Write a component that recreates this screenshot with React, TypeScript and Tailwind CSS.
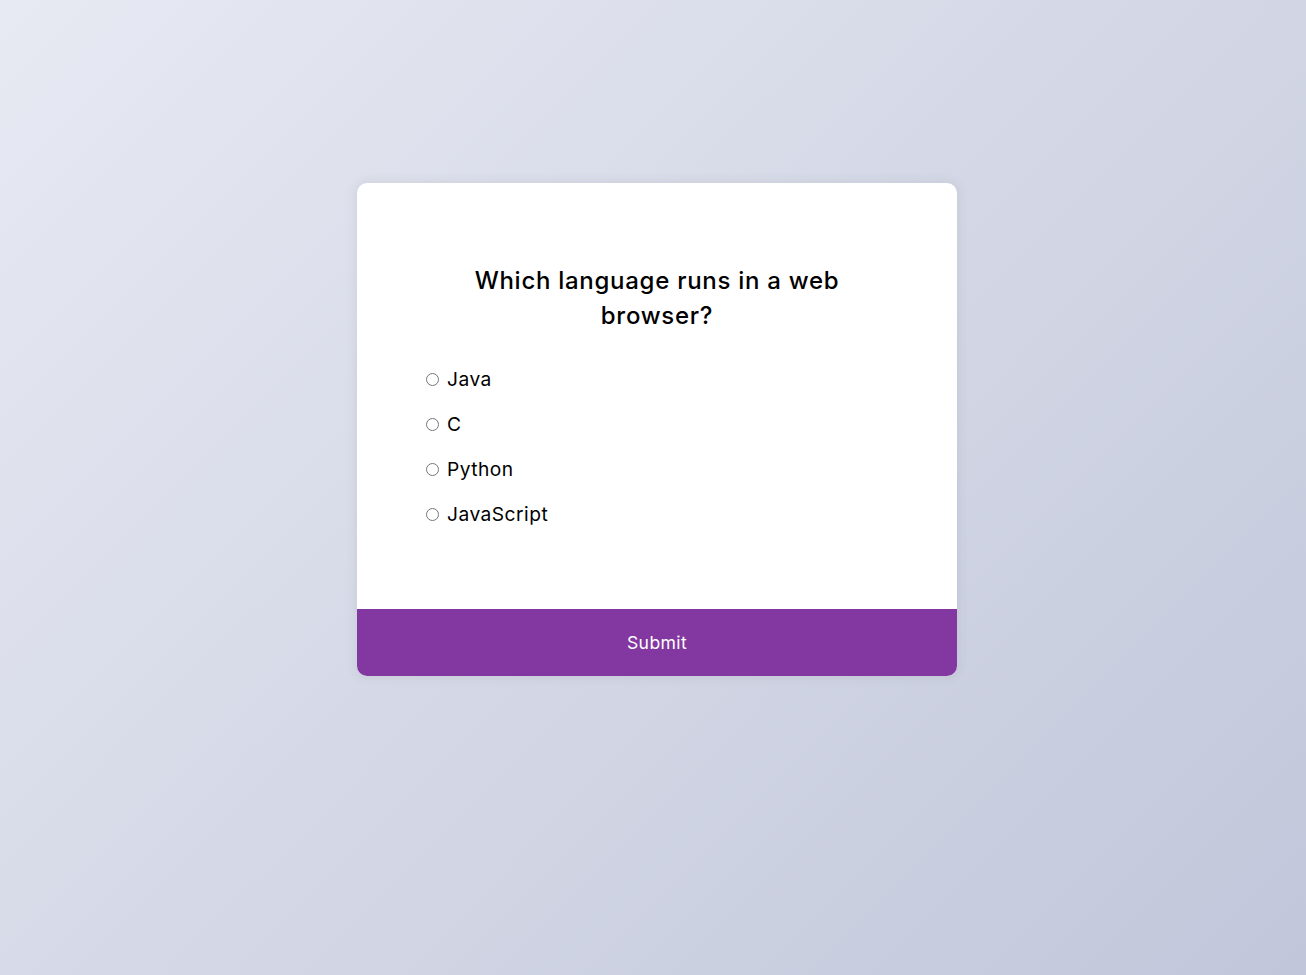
import React from "react";

export default function App() {
  const options = ["Java", "C", "Python", "JavaScript"];
  return (
    <div
      className="min-h-screen w-full flex flex-col items-center pt-[183px] pl-[8px] bg-[linear-gradient(135deg,#e7eaf3_0%,#d4d8e6_50%,#c1c6da_100%)]"
      style={{ fontFamily: "Inter, 'Noto Sans', sans-serif" }}
    >
      <div className="w-[600px] bg-white rounded-[10px] overflow-hidden shadow-[0_0_10px_2px_rgba(100,100,100,0.1)]">
        <div className="p-16">
          <h2 className="px-4 py-4 text-center text-[24px] leading-[35px] font-medium tracking-[0.03em] text-black">
            Which language runs in a web browser?
          </h2>
          <ul className="list-none p-0">
            {options.map((o) => (
              <li key={o} className="my-4 text-[19.2px] leading-[29px] flex items-center text-black tracking-[0.025em]">
                <input
                  type="radio"
                  name="answer"
                  id={o}
                  className="w-[13px] h-[13px] ml-[5px] mr-[8px] accent-gray-500"
                />
                <label htmlFor={o}>{o}</label>
              </li>
            ))}
          </ul>
        </div>
        <button className="block w-full bg-[#8337a0] text-white text-[17.6px] leading-[26px] py-[20.5px] border-none cursor-pointer tracking-[0.02em]">
          Submit
        </button>
      </div>
    </div>
  );
}
